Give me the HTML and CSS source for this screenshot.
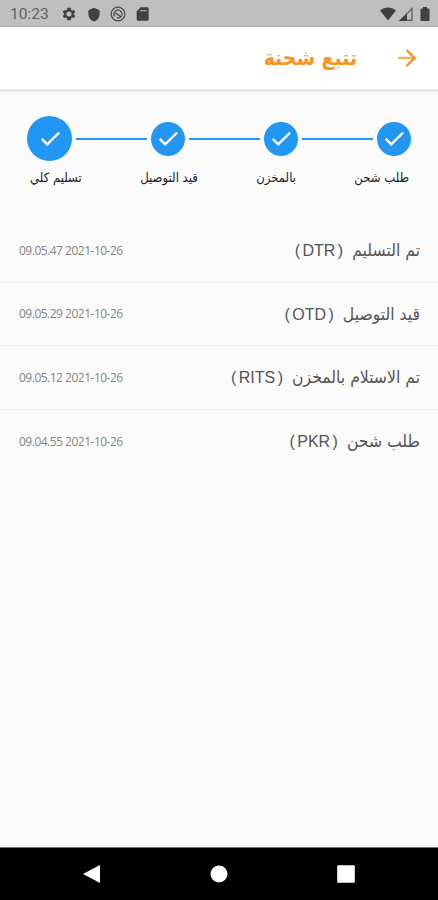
FILE: index.html
```html
<!DOCTYPE html>
<html lang="ar" dir="rtl">
<head>
    <meta charset="UTF-8">
    <meta name="viewport" content="width=device-width, initial-scale=1.0">
    <title>تتبع شحنة</title>
    <link rel="stylesheet" href="styles.css">
</head>
<body>
    <div class="status-bar">
        <span class="clock">10:23</span>
        <div class="status-icons">
            <svg class="gear" viewBox="0 0 24 24"><path fill-rule="evenodd" d="M19.4 13a7.500 7.500 0 0 0 0-2l2.100-1.600-2-3.500-2.500 1a7.300 7.300 0 0 0-1.700-1L14.500 2.500h-5l-.8 3.400a7.300 7.300 0 0 0-1.700 1l-2.500-1-2 3.500L4.600 11a7.500 7.500 0 0 0 0 2l-2.100 1.600 2 3.500 2.500-1a7.300 7.300 0 0 0 1.700 1l.8 3.400h5l.8-3.400a7.300 7.300 0 0 0 1.700-1l2.500 1 2-3.500zM12 15.800a3.800 3.800 0 1 1 0-7.600 3.800 3.800 0 0 1 0 7.600z"/></svg>
            <svg class="shield" viewBox="0 0 24 24"><path d="M12 1 3 5v6c0 5.500 3.800 10.700 9 12 5.200-1.300 9-6.500 9-12V5z"/></svg>
            <svg class="sync" viewBox="0 0 24 24"><circle cx="12" cy="12" r="10.300"/><path d="M7 15.500a6 6 0 0 1 9.500-7.300 6 6 0 0 1-.5 8.300 6 6 0 0 1-6 1M8 10l8 6"/></svg>
            <svg class="card-icon" viewBox="0 0 24 24"><path fill-rule="evenodd" d="M20 2H10L4 8v12a2 2 0 0 0 2 2h14a2 2 0 0 0 2-2V4a2 2 0 0 0-2-2zM9 6.500h10v1.500H9z"/></svg>
        </div>
        <div class="system-icons">
            <svg class="wifi" viewBox="0 0 16 14"><path d="M0 3.500C4.500-.5 11.500-.5 16 3.500L8 13.500z"/></svg>
            <svg class="signal" viewBox="0 0 14 14"><path class="outline" d="M13 1.500v11.700H1.500z"/><path d="M8 6.500V14H0z"/></svg>
            <svg class="battery" viewBox="0 0 10 14"><path d="M3 0h4v1.500h1.500Q9.500 1.500 9.500 2.500V13q0 1-1 1h-7q-1 0-1-1V2.500q0-1 1-1H3z"/></svg>
        </div>
    </div>

    <header class="app-bar">
        <svg class="back" viewBox="0 0 18 18"><path class="shaft" d="M0 9h16"/><path d="m8.500 1 8 8-8 8"/></svg>
        <h1>تتبع شحنة</h1>
    </header>

    <main>
        <div class="stepper">
            <div class="step"><svg viewBox="0 0 24 24"><path d="m3 13 6 6L22 6"/></svg></div>
            <div class="line"></div>
            <div class="step"><svg viewBox="0 0 24 24"><path d="m3 13 6 6L22 6"/></svg></div>
            <div class="line"></div>
            <div class="step"><svg viewBox="0 0 24 24"><path d="m3 13 6 6L22 6"/></svg></div>
            <div class="line"></div>
            <div class="step current"><svg viewBox="0 0 24 24"><path d="m3 13 6 6L22 6"/></svg></div>
        </div>
        <div class="step-labels">
            <span>طلب شحن</span>
            <span>بالمخزن</span>
            <span>قيد التوصيل</span>
            <span>تسليم كلي</span>
        </div>

        <ul class="events">
            <li>
                <span class="name">تم التسليم</span>
                <bdi class="code">( DTR )</bdi>
                <time dir="ltr">09.05.47 2021-10-26</time>
            </li>
            <li>
                <span class="name">قيد التوصيل</span>
                <bdi class="code">( OTD )</bdi>
                <time dir="ltr">09.05.29 2021-10-26</time>
            </li>
            <li>
                <span class="name">تم الاستلام بالمخزن</span>
                <bdi class="code">( RITS )</bdi>
                <time dir="ltr">09.05.12 2021-10-26</time>
            </li>
            <li>
                <span class="name">طلب شحن</span>
                <bdi class="code">( PKR )</bdi>
                <time dir="ltr">09.04.55 2021-10-26</time>
            </li>
        </ul>
    </main>

    <nav class="nav-bar">
        <svg viewBox="0 0 18 18"><path d="M0 9 17 0v18z"/></svg>
        <svg viewBox="0 0 18 18"><circle cx="9" cy="9" r="8.500"/></svg>
        <svg viewBox="0 0 18 18"><rect x=".2" y=".2" width="17.600" height="17.600" rx="1"/></svg>
    </nav>
</body>
</html>
```
FILE: styles.css
```css
* {
    margin: 0;
    padding: 0;
    box-sizing: border-box;
}

body {
    height: 900px;
    display: flex;
    flex-direction: column;
    overflow: hidden;
    background: #fafafa;
    font-family: "DejaVu Sans Condensed", "DejaVu Sans", sans-serif;
}

svg {
    display: block;
    flex: none;
}

.status-bar {
    direction: ltr;
    height: 27px;
    padding: 2px 8px 0 10px;
    display: flex;
    align-items: center;
    background: #bfbfbf;
    border-bottom: 1px solid #b4b4b4;
    fill: #414141;
}

.clock {
    width: 51px;
    font: 15.5px Roboto, sans-serif;
    color: #626262;
}

.status-icons {
    display: flex;
    align-items: center;
    gap: 9px;
}

.status-icons svg {
    width: 16px;
    height: 16px;
}

.status-icons .shield {
    height: 15px;
}

.status-icons .sync {
    margin-left: -1px;
    fill: none;
    stroke: #4d4d4d;
    stroke-width: 2;
}

.status-icons .card-icon {
    margin-left: -1px;
}

.system-icons {
    display: flex;
    align-items: center;
    gap: 3px;
    margin-left: auto;
}

.wifi {
    width: 16px;
    height: 14px;
}

.signal {
    width: 14px;
    height: 14px;
}

.signal .outline {
    fill: none;
    stroke: #666;
    stroke-width: 1.4;
}

.battery {
    width: 10px;
    height: 14px;
    margin-left: 4px;
}

.app-bar {
    height: 65px;
    padding: 0 22px 0 0;
    display: flex;
    align-items: center;
    background: #fff;
    border-bottom: 3px solid #e7e7e7;
}

.back {
    width: 18px;
    height: 18px;
    fill: none;
    stroke: #ff931f;
    stroke-width: 2.4;
}

.back .shaft {
    stroke: #ffaf5a;
}

.app-bar h1 {
    margin-right: 41px;
    font-size: 21px;
    font-weight: bold;
    line-height: 30px;
    color: #f7931e;
}

main {
    flex: 1;
}

.stepper {
    display: flex;
    align-items: center;
    gap: 4px;
    height: 45px;
    margin: 24px 27px 0;
}

.step {
    width: 34px;
    height: 34px;
    display: flex;
    align-items: center;
    justify-content: center;
    border-radius: 50%;
    background: #2196f3;
}

.step.current {
    width: 45px;
    height: 45px;
}

.step svg {
    width: 22px;
    height: 22px;
    margin-bottom: 1px;
    fill: none;
    stroke: #fff;
    stroke-width: 2.6;
}

.line {
    flex: 1;
    height: 2px;
    background: #2a96ed;
}

.step-labels {
    display: flex;
    justify-content: space-between;
    align-items: center;
    height: 20px;
    margin: 6px 29px 0 30px;
    font-size: 13px;
    color: #222;
    white-space: nowrap;
}

.events {
    margin-top: 32px;
    list-style: none;
}

.events li {
    height: 63.5px;
    padding: 0 18px 0 19px;
    display: flex;
    align-items: center;
    border-bottom: 1px solid #f0f0f0;
    white-space: nowrap;
}

.events li:last-child {
    border-bottom: none;
}

.name {
    font-size: 17.4px;
    color: #555;
}

.code {
    margin-right: 9px;
    padding-top: 2px;
    font: 16px "Liberation Sans", sans-serif;
    word-spacing: -2px;
    color: #555;
}

.events time {
    margin-right: auto;
    font: 12px "Open Sans", sans-serif;
    letter-spacing: -0.5px;
    color: #858585;
}

.nav-bar {
    direction: ltr;
    height: 53px;
    padding: 0 83px;
    display: flex;
    align-items: center;
    justify-content: space-between;
    background: #000;
    border-top: 1px solid #777;
    fill: #fff;
}

.nav-bar svg {
    width: 18px;
    height: 18px;
}
```
